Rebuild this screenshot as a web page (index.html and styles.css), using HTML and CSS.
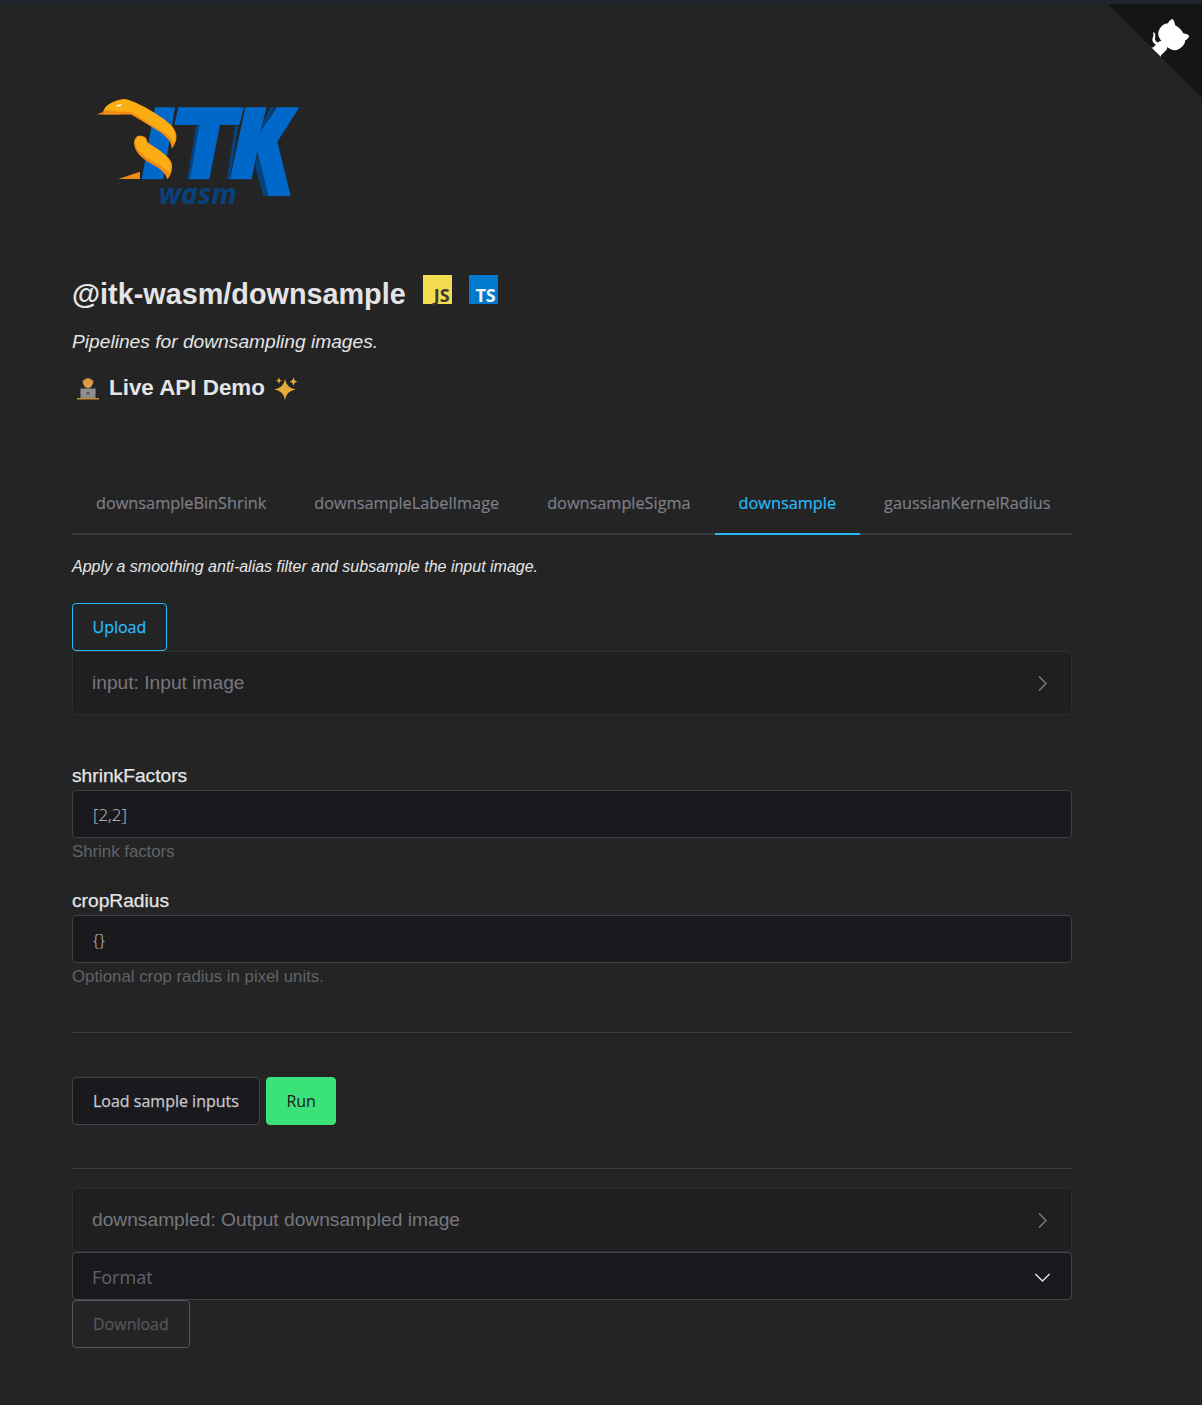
FILE: index.html
```html
<!DOCTYPE html>
<html lang="en">
<head>
	<meta charset="UTF-8">
	<title>@itk-wasm/downsample</title>
	<link rel="stylesheet" href="styles.css">
</head>
<body>
	<a class="corner" href="#">
		<svg viewBox="0 0 250 250" width="94" height="94">
			<path fill="#151513" d="M0,0 L115,115 L130,115 L142,142 L250,250 L250,0 Z"/>
			<path fill="#fff" d="M128.3,109.0 C113.8,99.7 119.0,89.6 119.0,89.6 C122.0,82.7 120.5,78.6 120.5,78.6 C119.2,72.0 123.4,76.3 123.4,76.3 C127.3,80.9 125.5,87.3 125.5,87.3 C122.9,97.6 130.6,101.9 134.4,103.2"/>
			<path fill="#fff" d="M115.0,115.0 C114.9,115.1 118.7,116.5 119.8,115.4 L133.7,101.6 C136.9,99.2 139.9,98.4 142.2,98.6 C133.8,88.0 127.5,74.4 143.8,58.0 C148.5,53.4 154.0,51.2 159.7,51.0 C160.3,49.4 163.2,43.6 171.4,40.1 C171.4,40.1 176.1,42.5 178.8,56.2 C183.1,58.6 187.2,61.8 190.9,65.4 C194.5,69.0 197.7,73.2 200.1,77.6 C213.8,80.2 216.3,84.9 216.3,84.9 C212.7,93.1 206.9,96.0 205.4,96.6 C205.1,102.4 203.0,107.8 198.3,112.5 C181.9,128.9 168.3,122.5 157.7,114.1 C157.9,116.9 156.7,120.9 152.7,124.9 L141.0,136.5 C139.8,137.7 141.6,141.9 141.8,141.8 Z"/>
		</svg>
	</a>

	<div class="content">
		<svg class="logo" viewBox="36 0 744 420" width="248" height="140">
			<path fill="#06427e" d="M408 138 L382 298 L394 298 L420 138 Z M525 138 L500 298 L510 298 L535 138 Z M630 82 L598 152 L606 152 L646 82 Z M592 212 L586 262 L610 348 L625 348 Z"/>
			<path fill="#0068c9" d="M285 82 L345 82 L310 298 L245 298 Z"/>
			<path fill="#0068c9" d="M355 82 L552 82 L538 135 L480 135 L448 298 L390 298 L418 135 L343 135 Z"/>
			<path fill="#0068c9" d="M556 82 L620 82 L600 158 L650 82 L718 82 L652 185 L692 348 L625 348 L592 212 L575 298 L510 298 Z"/>
			<text class="logo-text" x="296" y="371">wasm</text>
			<path fill="#f08c12" d="M110 103 L128 97 C135 72 170 58 195 57 C225 62 300 104 330 132 C352 152 358 180 335 206 C335 188 325 175 300 156 L215 104 C190 102 160 106 140 104 Z"/>
			<path fill="#fbad14" d="M132 90 C140 72 170 60 195 58 C225 64 300 106 328 132 C348 152 350 176 342 192 C335 174 320 160 296 148 L215 97 C190 94 160 96 132 90 Z"/>
			<path fill="#f08c12" d="M232 168 C250 164 262 172 262 186 C285 203 322 222 334 246 C340 265 334 285 322 298 C318 282 305 270 280 255 C248 238 224 218 222 190 C222 180 226 172 232 168 Z"/>
			<path fill="#fbad14" d="M234 170 C250 168 258 175 258 186 C285 204 322 224 331 248 C334 260 332 272 327 282 C318 266 300 254 278 244 C250 228 228 208 226 188 C226 180 228 174 234 170 Z"/>
			<path fill="#f08c12" d="M175 297 L240 275 L240 297 Z"/>
			<path fill="#f4f0e0" d="M168 76 L184 72 L184 78 L170 80 Z"/>
		</svg>

		<h1 class="pkg">
			<span>@itk-wasm/downsample</span>
			<span class="badge badge-js">JS</span>
			<span class="badge badge-ts">TS</span>
		</h1>
		<p class="tagline">Pipelines for downsampling images.</p>
		<h2 class="demo">
			<svg class="emoji" viewBox="0 0 24 24" width="24" height="24">
				<path fill="#c98a2e" d="M6.500 5 Q12 -1 17.500 5 L17 8 L7 8 Z"/>
				<circle cx="12" cy="7.500" r="4.500" fill="#dc9a4a"/>
				<path fill="#6a5a48" d="M4.500 15 Q12 10 19.500 15 L19.500 18 L4.500 18 Z"/>
				<rect x="4.500" y="12.500" width="15" height="9.500" fill="#8d8d8f"/>
				<rect x="10.500" y="16" width="3" height="2.500" fill="#5f5567"/>
				<rect x="1" y="22" width="22" height="1.500" fill="#c98a2e"/>
			</svg>
			<span>Live API Demo</span>
			<svg class="emoji" viewBox="0 0 24 24" width="24" height="24">
				<path fill="#e6ac38" d="M11 3 Q12.500 12 21.500 13.500 Q12.500 15 11 24 Q9.500 15 0.500 13.500 Q9.500 12 11 3 Z"/>
				<path fill="#e6ac38" d="M19.500 1 Q20 5 23.500 5.500 Q20 6 19.500 10 Q19 6 15.500 5.500 Q19 5 19.500 1 Z"/>
				<path fill="#e6ac38" d="M5 1.500 Q5.400 4.200 8 4.600 Q5.400 5 5 7.700 Q4.600 5 2 4.600 Q4.600 4.200 5 1.500 Z"/>
			</svg>
		</h2>

		<div class="tabs">
			<div class="tab">downsampleBinShrink</div>
			<div class="tab">downsampleLabelImage</div>
			<div class="tab">downsampleSigma</div>
			<div class="tab active">downsample</div>
			<div class="tab">gaussianKernelRadius</div>
		</div>

		<p class="desc">Apply a smoothing anti-alias filter and subsample the input image.</p>

		<button class="btn btn-outline">Upload</button>
		<div class="details">
			<span>input: Input image</span>
			<svg viewBox="0 0 16 16" width="19" height="19"><path d="M5 2 L11 8 L5 14"/></svg>
		</div>

		<div class="field field-first">
			<label>shrinkFactors</label>
			<div class="input">[2,2]</div>
			<div class="help">Shrink factors</div>
		</div>
		<div class="field">
			<label>cropRadius</label>
			<div class="input">{}</div>
			<div class="help">Optional crop radius in pixel units.</div>
		</div>

		<hr class="rule rule-top">

		<div class="actions">
			<button class="btn">Load sample inputs</button>
			<button class="btn btn-run">Run</button>
		</div>

		<hr class="rule rule-bottom">

		<div class="details">
			<span>downsampled: Output downsampled image</span>
			<svg viewBox="0 0 16 16" width="19" height="19"><path d="M5 2 L11 8 L5 14"/></svg>
		</div>
		<div class="select">
			<span>Format</span>
			<svg viewBox="0 0 16 16" width="19" height="19"><path d="M2 5 L8 11 L14 5"/></svg>
		</div>
		<button class="btn btn-disabled">Download</button>
	</div>
</body>
</html>
```

FILE: styles.css
```css
*{padding:0;margin:0;box-sizing:border-box;}
html,body{
	background:#242424;
}
body{
	border-top:4px solid #20252b;
	color:#e4e4e7;
	font-family:"Liberation Sans",Arial,sans-serif;
	min-height:1401px;
}
.corner{
	position:absolute;
	top:4px;
	right:0;
	display:block;
	height:94px;
}
.content{
	width:1000px;
	margin-left:72px;
	padding-top:76px;
}
.logo{
	display:block;
}
.pkg{
	display:flex;
	align-items:flex-start;
	margin-top:58px;
	font-size:28.8px;
	line-height:33px;
	font-weight:bold;
}
.badge{
	display:flex;
	align-items:flex-end;
	justify-content:flex-end;
	width:29px;
	height:29px;
	padding:0 2px 0 0;
	font-family:"Open Sans",sans-serif;
	font-size:18px;
	line-height:17px;
	font-weight:700;
}
.badge-js{
	margin-left:17px;
	margin-top:-3px;
	background:#f3dc50;
	color:#3a3a32;
}
.badge-ts{
	margin-left:17px;
	margin-top:-3px;
	background:#007acc;
	color:#f4f8fb;
}
.tagline{
	margin-top:20px;
	font-size:19.2px;
	line-height:22px;
	font-style:italic;
}
.demo{
	display:flex;
	align-items:center;
	gap:9px;
	margin-top:22px;
	padding-left:4px;
	font-size:22.4px;
	line-height:26px;
	font-weight:bold;
}
.tabs{
	display:flex;
	margin-top:74px;
	border-bottom:2px solid #3a3a40;
}
.tab{
	padding:16px 24px 18px;
	margin-bottom:-2px;
	border-bottom:2px solid transparent;
	color:#7e7e88;
	font-family:"Open Sans",sans-serif;
	font-size:16.3px;
	line-height:24px;
	-webkit-text-stroke:0.2px currentColor;
}
.tab.active{
	color:#27baf7;
	border-bottom-color:#27baf7;
}
.desc{
	margin-top:23px;
	font-size:16px;
	line-height:18px;
	font-style:italic;
}
.btn{
	display:block;
	height:48px;
	padding:0 20px;
	border:1px solid #44444c;
	border-radius:4px;
	background:#1a1a1e;
	color:#c8c8ce;
	font-family:"Open Sans",sans-serif;
	font-size:16px;
	-webkit-text-stroke:0.25px currentColor;
}
.btn-outline{
	margin-top:27px;
	padding:0 19.5px;
	background:transparent;
	border-color:#27baf7;
	color:#27baf7;
}
.btn-run{
	padding:0 19.5px;
	background:#3be279;
	border-color:#3be279;
	color:#1a1a1e;
	-webkit-text-stroke:0;
}
.btn-disabled{
	background:transparent;
	border-color:#55555c;
	color:#56565c;
}
.details{
	display:flex;
	align-items:center;
	justify-content:space-between;
	height:64px;
	padding:0 19px;
	border:1px solid #2d2d32;
	border-radius:4px;
	background:#1f1f22;
	color:#77777c;
	font-size:19.2px;
}
.details svg,.select svg{
	fill:none;
	stroke-width:1.2;
}
.details svg{
	stroke:#77777c;
}
.select svg{
	stroke:#e4e4e7;
}
.field label{
	display:block;
	font-size:19.2px;
	line-height:22px;
	margin-bottom:3px;
	-webkit-text-stroke:0.25px #e4e4e7;
}
.field-first{
	margin-top:50px;
}
.field{
	padding-bottom:29px;
}
.input{
	display:flex;
	align-items:center;
	height:48px;
	padding:0 20px;
	border:1px solid #3f3f46;
	border-radius:4px;
	background:#1a1a1e;
	color:#c8c8ce;
	font-family:"Open Sans",sans-serif;
	font-size:17px;
	font-weight:300;
}
.help{
	margin-top:4px;
	color:#626268;
	font-size:16.8px;
	line-height:19px;
}
.rule{
	border:0;
	border-top:1px solid #3a3a40;
}
.rule-top{
	margin-top:17px;
}
.actions{
	display:flex;
	gap:6px;
	margin-top:44px;
}
.rule-bottom{
	margin-top:43px;
	margin-bottom:19px;
}
.select{
	display:flex;
	align-items:center;
	justify-content:space-between;
	height:48px;
	padding:2px 19px 0;
	border:1px solid #44444c;
	border-radius:4px;
	background:#1a1a1e;
	color:#62626a;
	font-family:"Open Sans",sans-serif;
	font-size:18px;
}
.logo-text{
	fill:#06427e;
	font-family:"Open Sans",sans-serif;
	font-size:85px;
	font-style:italic;
	font-weight:bold;
}
```
